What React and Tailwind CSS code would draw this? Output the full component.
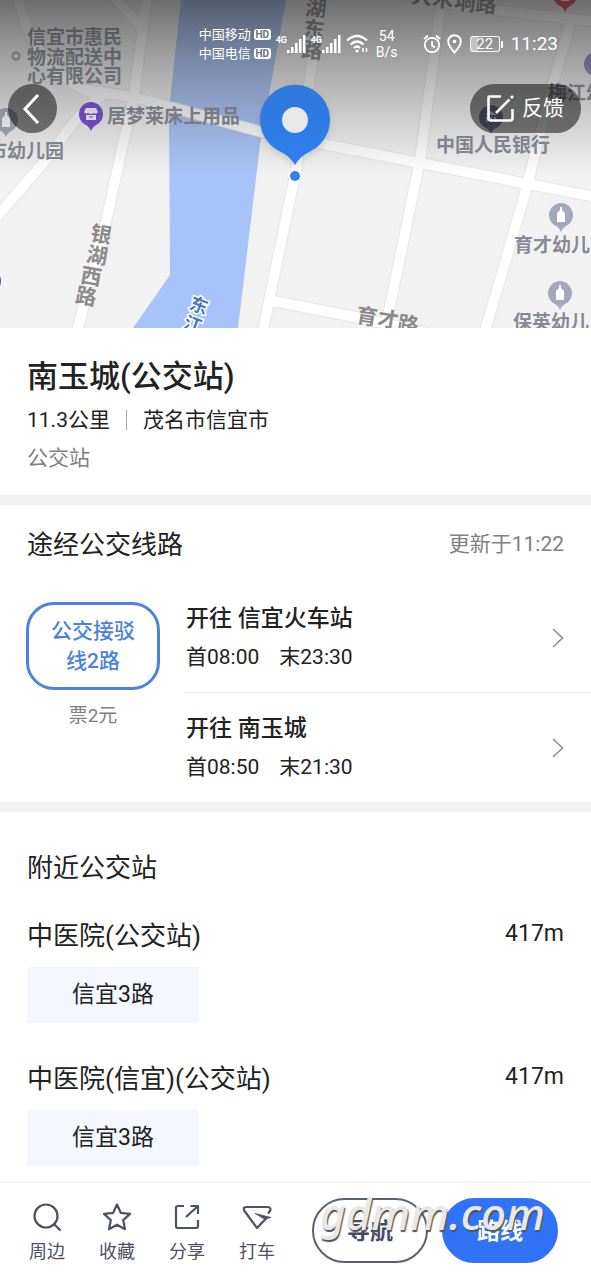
const lines = [
  { to: '信宜火车站', first: '08:00', last: '23:30' },
  { to: '南玉城', first: '08:50', last: '21:30' },
];

const stations = [
  { name: '中医院(公交站)', distance: '417m', routes: ['信宜3路'] },
  { name: '中医院(信宜)(公交站)', distance: '417m', routes: ['信宜3路'] },
];

const roads = [
  'M14 -10 L30 34 Q50 76 94 94',
  'M108 -10 L143 30',
  'M148 -10 L134 95 L119 162 L106 222 L76 335',
  'M86 90 L134 97 L262 132 L400 159 L600 198',
  'M104 94 Q74 116 56 148 L-6 220',
  'M325 -10 L311 70 L296 170 L262 335',
  'M443 -10 L420 160 L384 335',
  'M572 15 L550 95 L526 190 L484 335',
  'M340 -20 L460 6 L600 22',
  'M268 300 L360 318 L460 340',
];

export default function App() {
  return (
    <div className="min-h-screen flex flex-col bg-white text-[#222] font-[Roboto,'Noto_Sans_CJK_SC',sans-serif]">
      <header className="relative h-[328px] overflow-hidden bg-[#f2f2f2]">
        <StationMap />
        <div className="relative">
          <StatusBar />
          <div className="flex justify-between pl-2 pr-[10px] pt-5">
            <button aria-label="返回" className="size-[49px] rounded-full bg-black/50 text-white flex items-center justify-center">
              <svg width="28" height="32" viewBox="0 0 28 32" fill="none" stroke="currentColor" strokeWidth="3">
                <path d="M19 2 L6 16 L19 30" />
              </svg>
            </button>
            <button className="h-[49px] w-[111px] rounded-full bg-black/50 text-white text-[21px] flex items-center justify-center gap-2">
              <svg width="27" height="27" viewBox="0 0 27 27" fill="none" stroke="currentColor" strokeWidth="2.6">
                <path d="M14 1.5 H2.500 Q1.500 1.5 1.5 2.500 V23 Q1.5 25.5 4 25.5 H23 Q25.500 25.5 25.5 23 V14 M9 18 L22.500 4.500 M24 3 L26 1" />
              </svg>
              反馈
            </button>
          </div>
        </div>
      </header>

      <main>
        <section className="px-[27px] pt-[29px] pb-[22px] flex flex-col gap-2">
          <h1 className="text-[31px] leading-10 font-medium">南玉城(公交站)</h1>
          <div className="flex items-center text-[21px] leading-[30px]">
            <span>11.3公里</span>
            <span className="w-px h-5 bg-[#aaa] mx-4" />
            <span>茂名市信宜市</span>
          </div>
          <p className="text-[21px] leading-[30px] text-[#808080]">公交站</p>
        </section>

        <section className="border-t-[10px] border-[#f2f2f2]">
          <div className="flex items-center justify-between px-[27px] pt-5">
            <h2 className="text-[26px] leading-10">途经公交线路</h2>
            <span className="text-[21px] text-[#808080]">更新于11:22</span>
          </div>
          <div className="flex pl-[26px] pt-[18px] gap-[26px]">
            <div className="w-[134px] shrink-0 pt-[19px] text-center">
              <div className="h-[88px] rounded-[28px] border-[3px] border-[#4b82dc] text-[#4b82dc] text-[21px] leading-[30px] font-medium flex items-center justify-center px-5">
                公交接驳线2路
              </div>
              <p className="mt-3 text-[19px] leading-7 text-[#808080]">票2元</p>
            </div>
            <ul className="flex-1">
              {lines.map((l) => (
                <li key={l.to} className="border-b border-[#ececec] last:border-b-0">
                  <a href="#line" className="flex items-center justify-between pt-[17px] pb-4 pr-[27px] leading-[38px]">
                    <div>
                      <h3 className="text-[23px] leading-[38px] font-medium">开往 {l.to}</h3>
                      <p className="text-[21px] leading-[38px] flex gap-5">
                        <span>首{l.first}</span>
                        <span>末{l.last}</span>
                      </p>
                    </div>
                    <svg width="12" height="20" viewBox="0 0 12 20" fill="none" stroke="#8a8a8a" strokeWidth="1.5">
                      <path d="M1 1 L10.500 10 L1 19" />
                    </svg>
                  </a>
                </li>
              ))}
            </ul>
          </div>
        </section>

        <section className="border-t-[10px] border-[#f2f2f2] px-[27px] pt-9 pb-[14px]">
          <h2 className="text-[26px] leading-10">附近公交站</h2>
          <ul className="mt-7 flex flex-col gap-9">
            {stations.map((s) => (
              <li key={s.name}>
                <div className="flex justify-between">
                  <h3 className="text-[26px] leading-10">{s.name}</h3>
                  <span className="text-[23px] leading-9">{s.distance}</span>
                </div>
                {s.routes.map((r) => (
                  <button key={r} className="mt-[11px] h-14 w-[172px] bg-[#f4f7fe] text-[23px]">{r}</button>
                ))}
              </li>
            ))}
          </ul>
        </section>
      </main>

      <footer className="relative mt-auto border-t-2 border-[#f5f5f5] pl-3 pr-[33px] pt-[15px] pb-[14px] flex items-start">
        <Tool label="周边">
          <circle cx="14" cy="14" r="11.5" />
          <path d="M22 22 L28.500 28.500" />
        </Tool>
        <Tool label="收藏">
          <path d="M15 2.500 L18.800 10.800 L28 11.900 L21.200 18.100 L23 27.200 L15 22.700 L7 27.200 L8.800 18.100 L2 11.900 L11.200 10.800 Z" />
        </Tool>
        <Tool label="分享">
          <path d="M12 4 H6 Q4 4 4 6 V24 Q4 26 6 26 H24 Q26 26 26 24 V18 M14 15 L26 4 M18.500 4 H26 V12" />
        </Tool>
        <Tool label="打车">
          <path d="M24.500 16 L15 26 L2.500 9 Q0.500 5 4 5 H26 Q29.500 5.500 28 9 L26 11.500" />
          <path d="M13 11.500 L29 15.500 L22.500 17 Z" fill="currentColor" strokeWidth="0.8" />
        </Tool>
        <div className="flex-1 flex gap-[14px] ml-5">
          <button className="flex-1 h-[65px] pt-1 rounded-full border-2 border-[#5c6072] text-[#454b63] text-[23px] font-bold">导航</button>
          <button className="flex-1 h-[65px] pt-1 rounded-full border-2 border-[#3072f8] bg-[#3072f8] text-white text-[23px] font-bold">路线</button>
        </div>
        <span className="absolute right-[46px] top-0 leading-[60px] text-[44px] italic font-medium text-[#e8e8e8] font-['Noto_Sans',sans-serif] [text-shadow:1px_2px_1px_#555] pointer-events-none">
          gdmm.com
        </span>
      </footer>
    </div>
  );
}

function Tool({ label, children }) {
  return (
    <button className="w-[70px] pt-1 flex flex-col items-center text-[#4c5163]">
      <svg width="30" height="30" viewBox="0 0 30 30" fill="none" stroke="currentColor" strokeWidth="2.2" strokeLinejoin="round">
        {children}
      </svg>
      <span className="mt-[6px] text-[18px] leading-7">{label}</span>
    </button>
  );
}

function StatusBar() {
  return (
    <div className="h-16 pt-6 pr-[33px] flex items-center justify-end text-white">
      <div className="text-[13px] leading-[19px]">
        {['中国移动', '中国电信'].map((c) => (
          <div key={c} className="flex items-center gap-[3px]">
            {c}
            <span className="w-[17px] h-[11px] rounded-[3px] bg-white text-[#68717f] text-[10px] leading-[11px] font-bold text-center">HD</span>
          </div>
        ))}
      </div>
      <Signal />
      <Signal />
      <svg className="ml-[5px]" width="23" height="20" viewBox="0 0 23 20" fill="none" stroke="currentColor" strokeWidth="2.2">
        <path d="M1 6.500 Q11 -2.500 21 6.500 M4.500 10.500 Q11 4.500 17.500 10.500 M8 14 Q11 11 14 14" />
        <circle cx="11" cy="17" r="1.500" fill="currentColor" stroke="none" />
        <path d="M17 14 V18 M20.500 14 V18" strokeWidth="1.5" />
      </svg>
      <div className="ml-[7px] w-[22px] text-center text-[14px] leading-4">
        54<br />B/s
      </div>
      <svg className="ml-[25px]" width="18" height="20" viewBox="0 0 18 20" fill="none" stroke="currentColor" strokeWidth="1.8">
        <circle cx="9" cy="11" r="7.200" />
        <path d="M9 7 V11.500 L12 13.500 M1 5 L5 1.500 M17 5 L13 1.500" />
      </svg>
      <svg className="ml-[6px]" width="15" height="20" viewBox="0 0 15 20" fill="none" stroke="currentColor" strokeWidth="1.9">
        <path d="M7.500 18.500 Q1.200 11.500 1.200 7.500 A6.300 6.300 0 0 1 13.800 7.500 Q13.800 11.500 7.500 18.500 Z" />
        <circle cx="7.500" cy="7.500" r="1.800" fill="currentColor" stroke="none" />
      </svg>
      <div className="ml-2 flex items-center gap-px">
        <span className="w-[30px] h-4 rounded-[3px] border border-white/90 bg-linear-to-r from-white/45 from-25% to-transparent to-25% text-[15px] leading-[14px] text-center">22</span>
        <span className="w-[2px] h-[7px] bg-white" />
      </div>
      <span className="ml-2 text-[19px]">11:23</span>
    </div>
  );
}

function Signal() {
  return (
    <div className="ml-[5px] flex items-start">
      <span className="w-[11px] text-[9px] leading-[10px] font-bold">4G</span>
      <svg width="19" height="18" viewBox="0 0 19 18" fill="currentColor">
        <path d="M0 15h2.500v3H0z M4 12h2.500v6H4z M8 8h2.500v10H8z M12 4h2.500v14H12z M16 0h2.500v18H16z" />
      </svg>
    </div>
  );
}

function StationMap() {
  return (
    <svg className="absolute inset-0 size-full" viewBox="0 0 591 328" preserveAspectRatio="xMidYMin slice">
      <defs>
        <linearGradient id="pin" x1="0" y1="0" x2="0" y2="1">
          <stop offset="0" stopColor="#2f78dc" />
          <stop offset="1" stopColor="#2f7fee" />
        </linearGradient>
        <linearGradient id="shade" x1="0" y1="0" x2="0" y2="1">
          <stop offset="0" stopColor="#222" stopOpacity="0.64" />
          <stop offset="0.55" stopColor="#444" stopOpacity="0.3" />
          <stop offset="1" stopColor="#555" stopOpacity="0" />
        </linearGradient>
      </defs>
      <path d="M181 0 H286 L260 145 L238 328 H133 L170 275 L169 110 Z" fill="#a8c3f9" />
      <g fill="none" strokeLinejoin="round">
        {roads.map((d) => <path key={d} d={d} stroke="#e6e6e6" strokeWidth="12" />)}
        {roads.map((d) => <path key={d} d={d} stroke="#fff" strokeWidth="10" />)}
      </g>

      {/* road names run along the road, one glyph at a time */}
      <g fill="#8b8b8b" fontSize="21" fontWeight="700" textAnchor="middle">
        <Glyphs angle={10} items={[['银', 101, 235], ['湖', 97, 256], ['西', 91, 277], ['路', 86, 297]]} />
        <Glyphs angle={9} items={[['育', 367, 317], ['才', 388, 320], ['路', 408, 325]]} />
        <g fill="#888">
          <Glyphs angle={6} items={[['湖', 316, 9], ['东', 314, 30], ['路', 312, 51]]} />
          <Glyphs angle={6} items={[['大', 422, -3], ['木', 443, 0], ['垌', 465, 3], ['路', 486, 5]]} />
        </g>
        <g fill="#4a78bd" stroke="#fff" strokeWidth="3" paintOrder="stroke" fontSize="18">
          <Glyphs angle={20} items={[['东', 199, 305], ['江', 193, 324]]} />
        </g>
      </g>

      <g fill="#858a94" fontSize="19" fontWeight="700">
        <circle cx="16" cy="56" r="3.500" fill="none" stroke="#a0a3a8" strokeWidth="2" />
        <text x="27" y="44">信宜市惠民</text>
        <text x="27" y="64">物流配送中</text>
        <text x="27" y="83">心有限公司</text>
        <text x="107" y="123">居梦莱床上用品</text>
        <text x="-12" y="158">市幼儿园</text>
        <text x="436" y="152">中国人民银行</text>
        <text x="548" y="100">梅江幼儿园</text>
        <text x="514" y="252">育才幼儿</text>
        <text x="513" y="329">保英幼儿</text>
      </g>

      <Poi x={6} y={120} color="#a2a9bd"><Bottle /></Poi>
      <Poi x={561} y={215} color="#a2a9bd"><Bottle /></Poi>
      <Poi x={560} y={293} color="#a2a9bd"><Bottle /></Poi>
      <Poi x={491} y={117} color="#7684a8">
        <path d="M-6 -2 L0 -6 L6 -2 Z M-5 0h2v5h-2z M-1 0h2v5h-2z M3 0h2v5h-2z" fill="#fff" />
      </Poi>
      <Poi x={565} y={-5} color="#e0475a">
        <path d="M-6 0h12v2H-6z M-4 4h8v2h-8z" fill="#fff" />
      </Poi>
      <Poi x={596} y={64} color="#8c86c4" />
      <Poi x={-11} y={281} color="#6a4cc0" />
      <Poi x={91} y={114} color="#7547dc">
        <path d="M-5 -6 H5 L7 -2 Q5 1 3 -1 Q0 1 -3 -1 Q-5 1 -7 -2 Z M-5 1 H5 V6 H-5 Z" fill="#fff" />
        <path d="M-2 3h4" stroke="#7547dc" />
      </Poi>

      <rect width="591" height="175" fill="url(#shade)" />

      <circle cx="295" cy="176" r="6.500" fill="#fff" />
      <circle cx="295" cy="176" r="5" fill="#3183ec" />
      <g className="drop-shadow-md">
        <path d="M295 165 Q290 156 279 151 A35 35 0 1 1 311 151 Q300 156 295 165 Z" fill="url(#pin)" />
        <circle cx="295" cy="120" r="13" fill="#e8e8e8" />
      </g>
    </svg>
  );
}

function Glyphs({ angle, items }) {
  return items.map(([ch, x, y]) => (
    <text key={ch} x={x} y={y} dy="7" transform={`rotate(${angle} ${x} ${y})`}>{ch}</text>
  ));
}

function Poi({ x, y, color, children }) {
  return (
    <g transform={`translate(${x} ${y})`}>
      <path d="M0 17 Q-2 12 -6 10.500 A12 12 0 1 1 6 10.500 Q2 12 0 17 Z" fill={color} />
      {children}
    </g>
  );
}

function Bottle() {
  return <path d="M-1 -8 H1 V-5 L4 -2 V7 H-4 V-2 L-1 -5 Z" fill="#fff" />;
}
